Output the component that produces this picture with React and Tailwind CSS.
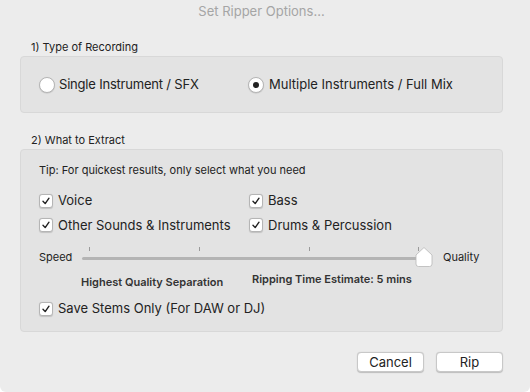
import React from "react";

function Check() {
  return (
    <span className="w-[14px] h-[14px] rounded-[3px] bg-white border border-[#b5b5b5] shadow-[0_0.5px_1px_rgba(0,0,0,0.15)] flex items-center justify-center shrink-0">
      <svg width="10" height="10" viewBox="0 0 10 10">
        <path d="M2 5.2 L4.2 7.6 L8 2.2" fill="none" stroke="#222" strokeWidth="1.4" strokeLinecap="round" strokeLinejoin="round" />
      </svg>
    </span>
  );
}

function CheckRow({ label }) {
  return (
    <div className="flex items-center gap-[5px] text-[13px] text-[#222]">
      <Check />
      <span>{label}</span>
    </div>
  );
}

function Radio({ on }) {
  return (
    <span className="w-[16px] h-[16px] rounded-full bg-white border border-[#b5b5b5] shadow-[0_0.5px_1px_rgba(0,0,0,0.15)] flex items-center justify-center shrink-0">
      {on && <span className="w-[6px] h-[6px] rounded-full bg-[#222]" />}
    </span>
  );
}

export default function App() {
  return (
    <div className="w-[530px] h-[392px] bg-white" style={{ fontFamily: "Inter, 'Liberation Sans', sans-serif" }}>
      <div className="w-full h-full bg-[#ececec] rounded-b-[6px] flex flex-col px-[20px] pr-[27px]">
        <div className="text-center text-[13px] text-[#a5a5a5] pt-[2px] h-[38px]">Set Ripper Options...</div>

        <div className="text-[11px] text-[#222] pl-[11px] h-[18px] leading-[18px]">1) Type of Recording</div>
        <div className="h-[57px] bg-[#e3e3e3] border border-[#d8d8d8] rounded-[4px] flex items-center pl-[18px] text-[13px] text-[#222]">
          <div className="flex items-center gap-[4px] w-[209px]">
            <Radio />
            <span className="tracking-[-0.2px]">Single Instrument / SFX</span>
          </div>
          <div className="flex items-center gap-[5px]">
            <Radio on />
            <span>Multiple Instruments / Full Mix</span>
          </div>
        </div>

        <div className="text-[11px] text-[#222] pl-[11px] mt-[18px] h-[18px] leading-[18px]">2) What to Extract</div>
        <div className="h-[183px] bg-[#e3e3e3] border border-[#d8d8d8] rounded-[4px] flex flex-col pl-[18px] pt-[12px]">
          <div className="text-[11px] text-[#222] h-[16px] leading-[16px]">Tip: For quickest results, only select what you need</div>
          <div className="grid grid-cols-[210px_1fr] mt-[13px] gap-y-[5px]">
            <CheckRow label="Voice" />
            <CheckRow label="Bass" />
            <CheckRow label="Other Sounds & Instruments" />
            <CheckRow label="Drums & Percussion" />
          </div>
          <div className="flex items-center mt-[10px] h-[24px]">
            <span className="text-[11px] text-[#222] w-[43px]">Speed</span>
            <div className="relative w-[346px] h-[24px]">
              <div className="absolute left-0 right-[8px] top-[12px] h-[3px] rounded-full bg-[#b4b4b4]" />
              <div className="absolute left-[7px] top-[2px] w-px h-[4px] bg-[#9a9a9a]" />
              <div className="absolute left-[117px] top-[2px] w-px h-[4px] bg-[#9a9a9a]" />
              <div className="absolute left-[227px] top-[2px] w-px h-[4px] bg-[#9a9a9a]" />
              <div className="absolute left-[336px] top-[2px] w-px h-[4px] bg-[#9a9a9a]" />
              <svg className="absolute left-[332px] top-[1px]" width="20" height="22" viewBox="0 0 20 22">
                <path d="M10 1.5 L18 9 L18 18 Q18 20.5 15.5 20.5 L4.5 20.5 Q2 20.5 2 18 L2 9 Z" fill="#fff" stroke="#b8b8b8" strokeWidth="0.8" strokeLinejoin="round" />
              </svg>
            </div>
            <span className="text-[11px] text-[#222] ml-[15px]">Quality</span>
          </div>
          <div className="flex text-[11px] font-semibold text-[#333] mt-[2px] h-[18px]">
            <span className="ml-[42px] mt-[3px] w-[171px]">Highest Quality Separation</span>
            <span>Ripping Time Estimate: 5 mins</span>
          </div>
          <div className="mt-[10px]">
            <CheckRow label="Save Stems Only (For DAW or DJ)" />
          </div>
        </div>

        <div className="flex justify-end gap-[12px] mt-[20px]">
          <button className="w-[67px] h-[20px] bg-white rounded-[4px] border border-[#c8c8c8] shadow-[0_0.5px_1px_rgba(0,0,0,0.2)] text-[13px] text-[#222] leading-[18px]">Cancel</button>
          <button className="w-[67px] h-[20px] bg-white rounded-[4px] border border-[#c8c8c8] shadow-[0_0.5px_1px_rgba(0,0,0,0.2)] text-[13px] text-[#222] leading-[18px]">Rip</button>
        </div>
      </div>
    </div>
  );
}
